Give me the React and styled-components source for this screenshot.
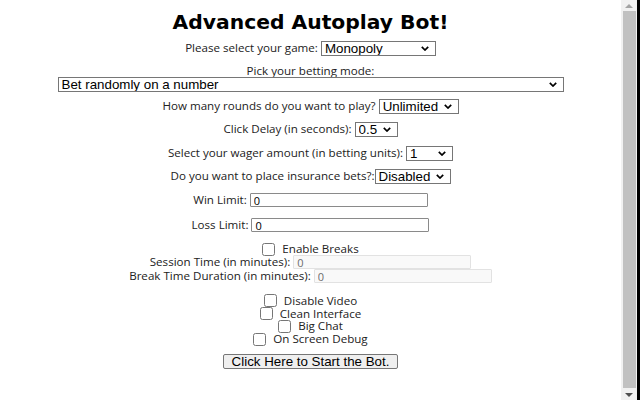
import React from 'react';
import styled, { createGlobalStyle } from 'styled-components';

const GlobalStyle = createGlobalStyle`
  html, body {
    margin: 0;
    padding: 0;
    background: #ffffff;
  }
  body {
    font-family: 'Open Sans', 'Noto Sans', sans-serif;
  }
`;

function Dropdown({ w, children }) {
  return (
    <SelectWrap $w={w}>
      <Select>{children}</Select>
      <Chevron viewBox="0 0 8 5" aria-hidden="true">
        <path d="M0.8 0.8 L4 4 L7.2 0.8" />
      </Chevron>
    </SelectWrap>
  );
}

export default function App() {
  return (
    <Frame>
      <GlobalStyle />
      <Content>
        <Title>Advanced Autoplay Bot!</Title>

        <Row $mt={6}>
          <Label>Please select your game:</Label>
          <Dropdown w={115}>
            <option>Monopoly</option>
          </Dropdown>
        </Row>

        <Row $mt={8} $h={13}>
          <Label>Pick your betting mode:</Label>
        </Row>
        <Row $h={14}>
          <Dropdown w={506}>
            <option>Bet randomly on a number</option>
          </Dropdown>
        </Row>

        <Row $mt={7}>
          <Label>How many rounds do you want to play?</Label>
          <Dropdown w={80}>
            <option>Unlimited</option>
          </Dropdown>
        </Row>

        <Row $mt={7}>
          <Label>Click Delay (in seconds):</Label>
          <Dropdown w={43}>
            <option>0.5</option>
          </Dropdown>
        </Row>

        <Row $mt={8}>
          <Label>Select your wager amount (in betting units):</Label>
          <Dropdown w={47}>
            <option>1</option>
          </Dropdown>
        </Row>

        <Row $mt={7} $gap={0}>
          <Label>Do you want to place insurance bets?:</Label>
          <Dropdown w={76}>
            <option>Disabled</option>
          </Dropdown>
        </Row>

        <Row $mt={8}>
          <Label>Win Limit:</Label>
          <TextInput defaultValue="0" />
        </Row>

        <Row $mt={9}>
          <Label>Loss Limit:</Label>
          <TextInput defaultValue="0" />
        </Row>

        <Row $mt={10} $h={12} $gap={7}>
          <Check type="checkbox" />
          <Label>Enable Breaks</Label>
        </Row>
        <Row $h={14}>
          <Label>Session Time (in minutes):</Label>
          <TextInput defaultValue="0" disabled />
        </Row>
        <Row $h={14}>
          <Label>Break Time Duration (in minutes):</Label>
          <TextInput defaultValue="0" disabled />
        </Row>

        <Row $mt={11.6} $h={12.7} $gap={7}>
          <Check type="checkbox" />
          <Label>Disable Video</Label>
        </Row>
        <Row $h={12.7} $gap={7}>
          <Check type="checkbox" />
          <Label>Clean Interface</Label>
        </Row>
        <Row $h={12.7} $gap={7}>
          <Check type="checkbox" />
          <Label>Big Chat</Label>
        </Row>
        <Row $h={12.7} $gap={7}>
          <Check type="checkbox" />
          <Label>On Screen Debug</Label>
        </Row>

        <Row $mt={8.3} $h={15}>
          <StartButton type="button">Click Here to Start the Bot.</StartButton>
        </Row>
      </Content>

      <Scrollbar>
        <ArrowBox>
          <Arrow />
        </ArrowBox>
        <Thumb />
        <ArrowBox>
          <Arrow $down />
        </ArrowBox>
      </Scrollbar>
      <Edge />
    </Frame>
  );
}

const Frame = styled.div`
  width: 640px;
  height: 400px;
  display: flex;
  overflow: hidden;
  background: #ffffff;
`;

const Content = styled.main`
  width: 621px;
  flex: none;
  display: flex;
  flex-direction: column;
  align-items: center;
  padding-top: 10px;
  box-sizing: border-box;
`;

const Title = styled.h1`
  margin: 0;
  font-family: 'DejaVu Sans', Verdana, sans-serif;
  font-weight: 700;
  font-size: 20.3px;
  line-height: 24px;
  color: #000000;
`;

const Row = styled.div`
  display: flex;
  align-items: center;
  justify-content: center;
  gap: ${(p) => p.$gap ?? 3}px;
  height: ${(p) => p.$h ?? 16}px;
  margin-top: ${(p) => p.$mt ?? 0}px;
`;

const Label = styled.span`
  font-family: 'Open Sans', 'Noto Sans', sans-serif;
  font-size: 11.6px;
  line-height: 12px;
  color: #222222;
  white-space: nowrap;
`;

const SelectWrap = styled.span`
  position: relative;
  display: inline-flex;
  width: ${(p) => p.$w}px;
  height: 15px;
  flex: none;
`;

const Select = styled.select`
  appearance: none;
  width: 100%;
  height: 100%;
  box-sizing: border-box;
  margin: 0;
  padding: 0 16px 0 3px;
  border: 1px solid #767676;
  border-radius: 0;
  background: #ffffff;
  color: #000000;
  font-family: 'Liberation Sans', Arial, sans-serif;
  font-size: 13.33px;
  line-height: 13px;
  outline: none;
`;

const Chevron = styled.svg`
  position: absolute;
  right: 7px;
  top: 5px;
  width: 8px;
  height: 5px;
  fill: none;
  stroke: #000000;
  stroke-width: 1.7;
  pointer-events: none;
`;

const TextInput = styled.input`
  width: 178px;
  height: 14px;
  box-sizing: border-box;
  padding: 0 3px;
  border: 1px solid ${(p) => (p.disabled ? '#e2e2e2' : '#8a8a8a')};
  border-radius: 1px;
  background: ${(p) => (p.disabled ? '#f9f9f9' : '#ffffff')};
  color: ${(p) => (p.disabled ? '#6d6d6d' : '#000000')};
  font-family: 'Open Sans', 'Noto Sans', sans-serif;
  font-size: 11px;
  outline: none;
`;

const Check = styled.input`
  width: 13px;
  height: 13px;
  margin: 0;
  flex: none;
`;

const StartButton = styled.button`
  height: 15px;
  box-sizing: border-box;
  padding: 0 8px;
  border: 1px solid #767676;
  border-radius: 2px;
  background: #efefef;
  color: #000000;
  font-family: 'Liberation Sans', Arial, sans-serif;
  font-size: 13.33px;
  line-height: 13px;
`;

const Scrollbar = styled.div`
  width: 16px;
  flex: none;
  background: #f1f1f1;
  display: flex;
  flex-direction: column;
`;

const ArrowBox = styled.div`
  height: 11px;
  display: flex;
  align-items: center;
  justify-content: center;
`;

const Arrow = styled.div`
  width: 0;
  height: 0;
  border-left: 4px solid transparent;
  border-right: 4px solid transparent;
  ${(p) =>
    p.$down
      ? 'border-top: 4px solid #505050;'
      : 'border-bottom: 4px solid #a3a3a3;'}
`;

const Thumb = styled.div`
  flex: 1;
  width: 13px;
  margin: 0 1px 1px 2px;
  background: #c1c1c1;
`;

const Edge = styled.div`
  width: 3px;
  flex: none;
  background: #000000;
`;
